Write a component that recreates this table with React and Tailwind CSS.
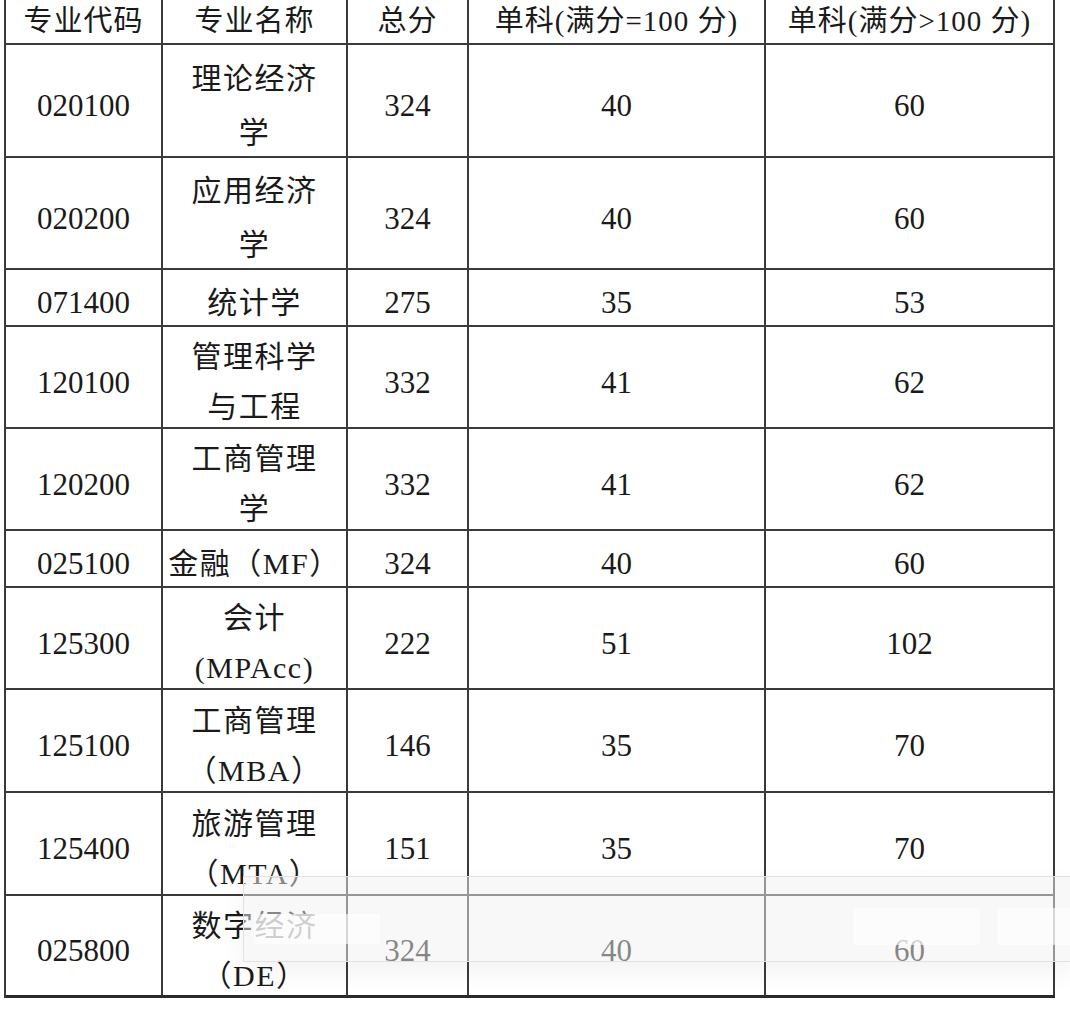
const cols = "grid grid-cols-[157px_185px_121px_297px_289px] grid-rows-1";

const rows = [
  { code: "020100", name: ["理论经济", "学"], total: "324", a: "40", b: "60", h: "h-[113px]", lh: "leading-[54px]" },
  { code: "020200", name: ["应用经济", "学"], total: "324", a: "40", b: "60", h: "h-[112px]", lh: "leading-[54px]" },
  { code: "071400", name: ["统计学"], total: "275", a: "35", b: "53", h: "h-[57px]", lh: "leading-[50px]" },
  { code: "120100", name: ["管理科学", "与工程"], total: "332", a: "41", b: "62", h: "h-[102px]", lh: "leading-[50px]" },
  { code: "120200", name: ["工商管理", "学"], total: "332", a: "41", b: "62", h: "h-[102px]", lh: "leading-[50px]" },
  { code: "025100", name: ["金融（MF）"], total: "324", a: "40", b: "60", h: "h-[57px]", lh: "leading-[50px]" },
  { code: "125300", name: ["会计", "(MPAcc)"], total: "222", a: "51", b: "102", h: "h-[102px]", lh: "leading-[50px]" },
  { code: "125100", name: ["工商管理", "（MBA）"], total: "146", a: "35", b: "70", h: "h-[103px]", lh: "leading-[50px]" },
  { code: "125400", name: ["旅游管理", "（MTA）"], total: "151", a: "35", b: "70", h: "h-[103px]", lh: "leading-[50px]" },
  { code: "025800", name: ["数字经济", "（DE）"], total: "324", a: "40", b: "60", h: "h-[102px]", lh: "leading-[50px]" },
];

function Num({ children }) {
  return (
    <div className="flex min-h-0 items-center justify-center border-r-2 border-[#3a3a3a] pt-[12px] text-[31px]">
      {children}
    </div>
  );
}

function Row({ r, last }) {
  return (
    <div className={`${cols} ${r.h} ${last ? "border-b-[3px] border-[#2a2a2a]" : "border-b-2 border-[#3a3a3a]"}`}>
      <Num>{r.code}</Num>
      <div className={`flex min-h-0 flex-col items-center justify-center border-r-2 border-[#3a3a3a] pt-[10px] text-[30px] tracking-[1.5px] ${r.lh}`}>
        {r.name.map((n, i) => (
          <div key={i} className="whitespace-nowrap">{n}</div>
        ))}
      </div>
      <Num>{r.total}</Num>
      <Num>{r.a}</Num>
      <Num>{r.b}</Num>
    </div>
  );
}

function Head({ children }) {
  return (
    <div className="flex items-center justify-center border-r-2 border-[#3a3a3a] whitespace-nowrap text-[29px] tracking-[1px]">
      {children}
    </div>
  );
}

export default function App() {
  return (
    <div className="relative w-[1070px] h-[1013px] overflow-hidden bg-white text-[#1a1a1a] font-['Liberation_Serif','Noto_Sans_CJK_SC',serif]">
      <div className="ml-[4px] w-[1051px] border-l-2 border-[#3a3a3a]">
        <div className={`${cols} h-[45px] border-b-2 border-[#3a3a3a]`}>
          <Head>专业代码</Head>
          <Head>专业名称</Head>
          <Head>总分</Head>
          <Head>单科(满分=100 分)</Head>
          <Head>单科(满分&gt;100 分)</Head>
        </div>
        {rows.map((r, i) => (
          <Row key={r.code} r={r} last={i === rows.length - 1} />
        ))}
      </div>

      {/* faded banner lying over the bottom rows */}
      <div className="absolute left-[243px] top-[876px] w-[830px] h-[86px] bg-[#f2f2f2]/50 border border-[#e2e2e2] shadow-[0_10px_24px_rgba(0,0,0,0.05)]">
        <div className="absolute left-[10px] top-[37px] w-[126px] h-[30px] bg-white/60" />
        <div className="absolute left-[609px] top-[31px] w-[127px] h-[37px] bg-white/60" />
        <div className="absolute left-[753px] top-[31px] w-[80px] h-[37px] bg-white/60" />
      </div>
    </div>
  );
}
